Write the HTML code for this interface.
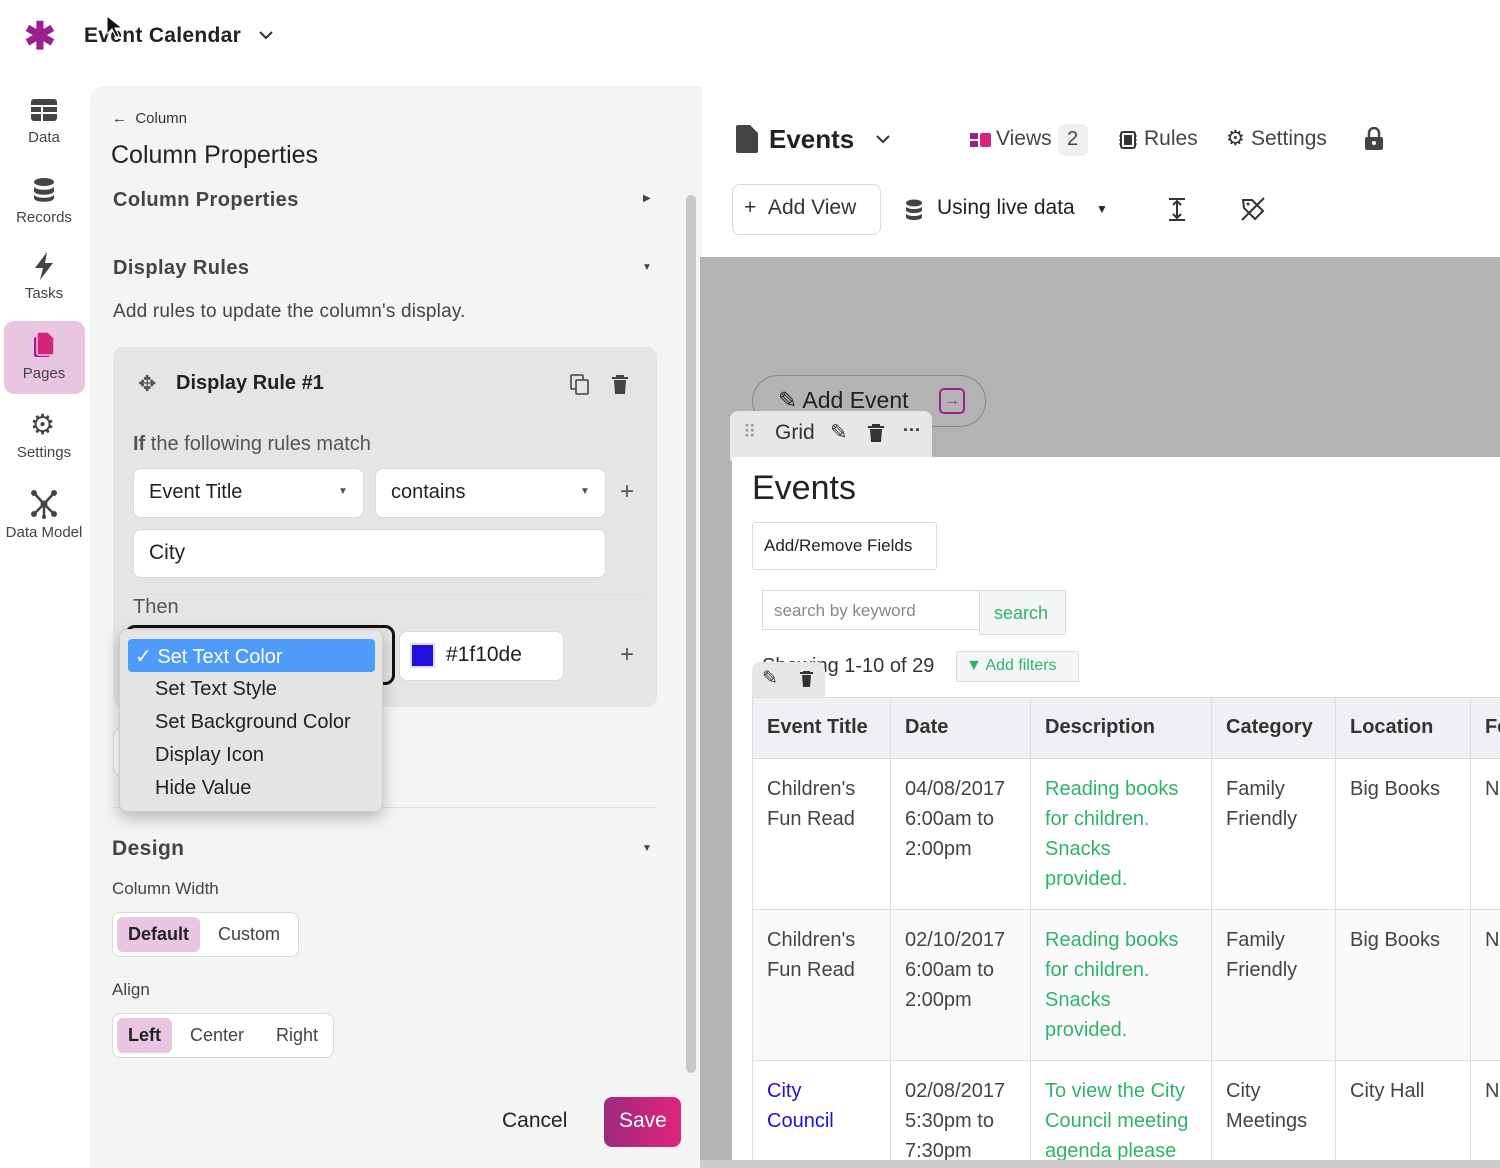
<!DOCTYPE html>
<html><head><style>
*{box-sizing:border-box;margin:0;padding:0}
body{width:1500px;height:1168px;overflow:hidden;background:#fff;font-family:"Liberation Sans",sans-serif;color:#222;position:relative}
.a{position:absolute}
.nav{position:absolute;left:0;width:88px;text-align:center;font-size:15px;color:#444}
.btn{position:absolute;background:#fff;border:1px solid #d9d9d9;border-radius:8px}
.t{position:absolute;white-space:nowrap}
td,th{border:1px solid #ddd;vertical-align:top;text-align:left;padding:15px 14px 0 14px;font-size:20px;line-height:30px;color:#444;font-weight:normal}
th{background:#eef0f3;font-weight:bold;padding:14px 14px;color:#333}
.g{color:#2eb46a}
</style></head><body>
<!-- top bar -->
<div class="t" style="left:24px;top:14px;font-size:38px;color:#9b1f8d;font-weight:bold">✱</div>
<div class="t" style="left:84px;top:24px;font-size:21px;font-weight:bold;color:#222;letter-spacing:.3px">Event Calendar</div>
<svg class="a" style="left:258px;top:29px" width="16" height="12"><path d="M2 3l6 6 6-6" stroke="#333" stroke-width="2" fill="none"/></svg>
<svg class="a" style="left:106px;top:15px" width="16" height="24"><path d="M1 1v18l5-5 4 8 3-1-4-8h7z" fill="#111" stroke="#fff"/></svg>

<!-- left nav -->
<svg class="a" style="left:30px;top:98px" width="28" height="24"><rect x="1" y="1" width="26" height="22" rx="3" fill="#444"/><path d="M1 8h26M1 15h26M12 8v15" stroke="#fff" stroke-width="2"/></svg>
<div class="nav" style="top:129px">Data</div>
<svg class="a" style="left:33px;top:177px" width="22" height="26"><ellipse cx="11" cy="5" rx="10" ry="4" fill="#444"/><path d="M1 9c0 5 20 5 20 0v5c0 5-20 5-20 0zM1 17c0 5 20 5 20 0v4c0 5-20 5-20 0z" fill="#444"/></svg>
<div class="nav" style="top:209px">Records</div>
<svg class="a" style="left:33px;top:252px" width="22" height="28"><path d="M14 0L2 16h8l-3 12 13-17h-8z" fill="#444"/></svg>
<div class="nav" style="top:285px">Tasks</div>
<div class="a" style="left:4px;top:321px;width:81px;height:73px;background:#e8c6e2;border-radius:10px"></div>
<svg class="a" style="left:32px;top:331px" width="24" height="28"><rect x="2" y="6" width="16" height="20" rx="2" fill="#9b1f8d"/><path d="M7 1h9l6 6v15a2 2 0 01-2 2H7a2 2 0 01-2-2V3a2 2 0 012-2z" fill="#d3237a" stroke="#e8c6e2" stroke-width="1.5"/></svg>
<div class="nav" style="top:365px">Pages</div>
<div class="t" style="left:30px;top:408px;font-size:28px;color:#444">⚙</div>
<div class="nav" style="top:444px">Settings</div>
<svg class="a" style="left:29px;top:489px" width="30" height="30"><path d="M5 4l10 11 10-11M15 15l-9 9M15 15l9 9M15 15v13" stroke="#444" stroke-width="2.5" fill="none"/><circle cx="5" cy="4" r="3" fill="#444"/><circle cx="25" cy="4" r="3" fill="#444"/><circle cx="15" cy="15" r="3.5" fill="#444"/><circle cx="5" cy="25" r="3" fill="#444"/><circle cx="25" cy="25" r="3" fill="#444"/><circle cx="15" cy="28" r="2" fill="#444"/></svg>
<div class="nav" style="top:524px">Data Model</div>

<!-- left panel -->
<div class="a" style="left:90px;top:86px;width:612px;height:1082px;background:#f4f4f4;border-top-left-radius:14px"></div>
<div class="t" style="left:112px;top:110px;font-size:15px;color:#333">← &nbsp;Column</div>
<div class="t" style="left:111px;top:141px;font-size:25px;color:#222">Column Properties</div>
<div class="t" style="left:113px;top:189px;font-size:20px;font-weight:bold;color:#444;letter-spacing:.4px">Column Properties</div>
<div class="t" style="left:643px;top:193px;font-size:10px;color:#444">▶</div>
<div class="t" style="left:113px;top:257px;font-size:20px;font-weight:bold;color:#444;letter-spacing:.4px">Display Rules</div>
<div class="t" style="left:642px;top:262px;font-size:10px;color:#444">▼</div>
<div class="t" style="left:113px;top:301px;font-size:19px;color:#444;letter-spacing:.2px">Add rules to update the column's display.</div>
<div class="a" style="left:686px;top:195px;width:10px;height:878px;background:#c8c8c8;border-radius:5px"></div>

<div class="a" style="left:113px;top:347px;width:544px;height:360px;background:#e7e4e5;border-radius:10px"></div>
<div class="t" style="left:138px;top:371px;font-size:22px;color:#555">✥</div>
<div class="t" style="left:176px;top:372px;font-size:20px;font-weight:bold;color:#222">Display Rule #1</div>
<svg class="a" style="left:570px;top:374px" width="20" height="22"><rect x="1" y="1" width="12" height="14" rx="1" fill="none" stroke="#555" stroke-width="1.8"/><rect x="6" y="6" width="12" height="14" rx="1" fill="#e7e4e5" stroke="#555" stroke-width="1.8"/></svg>
<svg class="a" style="left:612px;top:375px" width="16" height="20"><path d="M0 3h16M5 3V1h6v2" stroke="#444" stroke-width="2"/><path d="M2 5h12l-1 14H3z" fill="#444"/></svg>
<div class="t" style="left:133px;top:433px;font-size:20px;color:#555"><b>If</b> the following rules match</div>
<div class="btn" style="left:133px;top:468px;width:231px;height:50px;border-radius:8px"></div>
<div class="t" style="left:149px;top:481px;font-size:20px">Event Title</div>
<div class="t" style="left:338px;top:486px;font-size:10px;color:#456">▼</div>
<div class="btn" style="left:375px;top:468px;width:231px;height:50px"></div>
<div class="t" style="left:391px;top:481px;font-size:20px">contains</div>
<div class="t" style="left:580px;top:486px;font-size:10px;color:#456">▼</div>
<div class="t" style="left:620px;top:478px;font-size:24px;color:#555">+</div>
<div class="btn" style="left:133px;top:529px;width:473px;height:49px"></div>
<div class="t" style="left:149px;top:541px;font-size:21px">City</div>
<div class="a" style="left:133px;top:594px;width:510px;height:1px;background:#ddd"></div>
<div class="t" style="left:133px;top:596px;font-size:20px;color:#555">Then</div>
<div class="a" style="left:125px;top:625px;width:270px;height:60px;border:3px solid #111;border-radius:10px"></div>
<div class="btn" style="left:399px;top:631px;width:165px;height:50px"></div>
<div class="a" style="left:412px;top:645px;width:21px;height:21px;background:#1f10de;outline:2px solid #ddd"></div>
<div class="t" style="left:446px;top:643px;font-size:21px">#1f10de</div>
<div class="t" style="left:620px;top:641px;font-size:24px;color:#555">+</div>
<div class="btn" style="left:113px;top:728px;width:20px;height:48px"></div>
<div class="a" style="left:113px;top:807px;width:544px;height:1px;background:#e0e0e0"></div>
<!-- dropdown -->
<div class="a" style="left:119px;top:629px;width:264px;height:183px;background:#e4e4e4;border-radius:8px;box-shadow:0 6px 16px rgba(0,0,0,.25);border:1px solid #ccc"></div>
<div class="a" style="left:128px;top:639px;width:247px;height:33px;background:#4f9bfa;border-radius:4px"></div>
<div class="t" style="left:135px;top:644px;font-size:20px;color:#fff">✓ Set Text Color</div>
<div class="t" style="left:155px;top:678px;font-size:20px">Set Text Style</div>
<div class="t" style="left:155px;top:711px;font-size:20px">Set Background Color</div>
<div class="t" style="left:155px;top:744px;font-size:20px">Display Icon</div>
<div class="t" style="left:155px;top:777px;font-size:20px">Hide Value</div>

<div class="t" style="left:112px;top:837px;font-size:21px;font-weight:bold;color:#444;letter-spacing:.4px">Design</div>
<div class="t" style="left:642px;top:843px;font-size:10px;color:#444">▼</div>
<div class="t" style="left:112px;top:879px;font-size:17px;color:#444">Column Width</div>
<div class="btn" style="left:112px;top:912px;width:187px;height:45px"></div>
<div class="a" style="left:117px;top:917px;width:83px;height:35px;background:#e8c6e2;border-radius:6px"></div>
<div class="t" style="left:128px;top:924px;font-size:18px;font-weight:bold">Default</div>
<div class="t" style="left:218px;top:924px;font-size:18px;color:#444">Custom</div>
<div class="t" style="left:112px;top:980px;font-size:17px;color:#444">Align</div>
<div class="btn" style="left:112px;top:1013px;width:222px;height:45px"></div>
<div class="a" style="left:117px;top:1018px;width:55px;height:35px;background:#e8c6e2;border-radius:6px"></div>
<div class="t" style="left:128px;top:1025px;font-size:18px;font-weight:bold">Left</div>
<div class="t" style="left:190px;top:1025px;font-size:18px;color:#444">Center</div>
<div class="t" style="left:276px;top:1025px;font-size:18px;color:#444">Right</div>
<div class="t" style="left:502px;top:1109px;font-size:21px">Cancel</div>
<div class="a" style="left:604px;top:1097px;width:77px;height:50px;border-radius:8px;background:linear-gradient(90deg,#9b2a7f,#e2247a)"></div>
<div class="t" style="left:619px;top:1109px;font-size:21px;color:#fff">Save</div>

<!-- right header -->
<svg class="a" style="left:736px;top:125px" width="22" height="28"><path d="M2 0h12l8 8v18a2 2 0 01-2 2H2a2 2 0 01-2-2V2a2 2 0 012-2z" fill="#444"/></svg>
<div class="t" style="left:769px;top:124px;font-size:26px;font-weight:bold">Events</div>
<svg class="a" style="left:875px;top:133px" width="16" height="12"><path d="M2 3l6 6 6-6" stroke="#333" stroke-width="2" fill="none"/></svg>
<svg class="a" style="left:970px;top:132px" width="22" height="16"><rect x="0" y="1" width="8" height="6" fill="#9b1f8d"/><rect x="0" y="9" width="8" height="6" fill="#9b1f8d"/><rect x="10" y="1" width="11" height="14" rx="2" fill="#d3237a"/></svg>
<div class="t" style="left:996px;top:127px;font-size:21px;color:#444">Views</div>
<div class="a" style="left:1058px;top:124px;width:30px;height:32px;background:#f0f0f0;border-radius:6px"></div>
<div class="t" style="left:1067px;top:128px;font-size:20px;color:#444">2</div>
<svg class="a" style="left:1118px;top:129px" width="20" height="22"><rect x="3" y="3" width="14" height="16" rx="2" fill="none" stroke="#333" stroke-width="2"/><rect x="6" y="6" width="8" height="10" fill="#333"/><path d="M1 7h2M1 11h2M1 15h2M17 7h2M17 11h2M17 15h2" stroke="#333"/></svg>
<div class="t" style="left:1144px;top:127px;font-size:21px;color:#444">Rules</div>
<div class="t" style="left:1226px;top:126px;font-size:21px;color:#333">⚙</div>
<div class="t" style="left:1251px;top:127px;font-size:21px;color:#444">Settings</div>
<svg class="a" style="left:1364px;top:127px" width="20" height="24"><path d="M5 10V6a5 5 0 0110 0v4" stroke="#444" stroke-width="2.5" fill="none"/><rect x="1" y="10" width="18" height="13" rx="2" fill="#444"/><circle cx="10" cy="16" r="2" fill="#fff"/></svg>
<div class="btn" style="left:732px;top:184px;width:149px;height:51px"></div>
<div class="t" style="left:744px;top:196px;font-size:21px;color:#333">+ &nbsp;Add View</div>
<svg class="a" style="left:905px;top:199px" width="18" height="22"><ellipse cx="9" cy="4" rx="8" ry="3.5" fill="#444"/><path d="M1 7c0 4 16 4 16 0v4c0 4-16 4-16 0zM1 14c0 4 16 4 16 0v4c0 4-16 4-16 0z" fill="#444"/></svg>
<div class="t" style="left:937px;top:196px;font-size:21px;color:#222">Using live data</div>
<div class="t" style="left:1096px;top:202px;font-size:12px;color:#222">▼</div>
<svg class="a" style="left:1166px;top:197px" width="22" height="26"><path d="M3 2h16M3 23h16M11 4v17M7 8l4-4 4 4M7 17l4 4 4-4" stroke="#333" stroke-width="2" fill="none"/></svg>
<svg class="a" style="left:1240px;top:196px" width="26" height="26"><path d="M3 4h9l11 11-8 8L4 12z" fill="none" stroke="#333" stroke-width="2"/><circle cx="8" cy="8" r="1.5" fill="#333"/><path d="M2 24L24 2" stroke="#333" stroke-width="2"/></svg>

<!-- grey canvas -->
<div class="a" style="left:700px;top:257px;width:800px;height:911px;background:#b3b3b3"></div>
<div class="a" style="left:752px;top:375px;width:234px;height:52px;border:1.5px solid #888;border-radius:26px"></div>
<div class="t" style="left:778px;top:387px;font-size:23px;color:#222">✎ Add Event</div>
<div class="a" style="left:939px;top:388px;width:26px;height:26px;border:2px solid #9b1f8d;border-radius:5px;color:#9b1f8d;text-align:center;font-size:16px;line-height:22px">→</div>
<div class="a" style="left:730px;top:411px;width:202px;height:50px;background:#e9e6e7;border-radius:8px 8px 0 0"></div>
<div class="t" style="left:743px;top:422px;font-size:18px;color:#999">⠿</div>
<div class="t" style="left:775px;top:421px;font-size:21px;color:#333">Grid</div>
<div class="t" style="left:830px;top:420px;font-size:21px;color:#333">✎</div>
<svg class="a" style="left:868px;top:424px" width="16" height="19"><path d="M0 3h16M5 3V1h6v2" stroke="#333" stroke-width="2"/><path d="M2 5h12l-1 13H3z" fill="#333"/></svg>
<div class="t" style="left:903px;top:420px;font-size:18px;color:#333;font-weight:bold">···</div>

<div class="a" style="left:732px;top:457px;width:768px;height:703px;background:#fff"></div>
<div class="t" style="left:752px;top:469px;font-size:34px;color:#222">Events</div>
<div class="btn" style="left:752px;top:522px;width:185px;height:48px;border-radius:3px"></div>
<div class="t" style="left:764px;top:536px;font-size:17px;color:#222">Add/Remove Fields</div>
<div class="a" style="left:762px;top:590px;width:218px;height:40px;border:1px solid #ddd"></div>
<div class="t" style="left:774px;top:601px;font-size:17px;color:#888">search by keyword</div>
<div class="a" style="left:979px;top:590px;width:87px;height:45px;border:1px solid #ddd;background:#f4f5f7"></div>
<div class="t" style="left:994px;top:603px;font-size:18px;color:#2eb46a">search</div>
<div class="t" style="left:762px;top:655px;font-size:20px;color:#333">Showing 1-10 of 29</div>
<div class="a" style="left:956px;top:651px;width:123px;height:31px;border:1px solid #ddd;background:#f4f5f7"></div>
<div class="t" style="left:966px;top:657px;font-size:16px;color:#2eb46a">▼ Add filters</div>
<div class="a" style="left:752px;top:662px;width:73px;height:36px;background:#e9e6e7;border-radius:8px 8px 0 0"></div>
<div class="t" style="left:762px;top:667px;font-size:19px;color:#333">✎</div>
<svg class="a" style="left:800px;top:671px" width="13" height="16"><path d="M0 2h13M4 2V0h5v2" stroke="#333" stroke-width="2"/><path d="M2 4h9l-1 12H3z" fill="#333"/></svg>

<div class="a" style="left:752px;top:697px;width:748px;height:463px;overflow:hidden">
<table style="border-collapse:collapse;width:780px;table-layout:fixed">
<col style="width:138px"><col style="width:140px"><col style="width:181px"><col style="width:124px"><col style="width:135px"><col style="width:62px">
<tr style="height:61px"><th>Event Title</th><th>Date</th><th>Description</th><th>Category</th><th>Location</th><th>Fe</th></tr>
<tr style="height:151px"><td>Children's Fun Read</td><td>04/08/2017 6:00am to 2:00pm</td><td class="g">Reading books for children. Snacks provided.</td><td>Family Friendly</td><td>Big Books</td><td>N</td></tr>
<tr style="height:151px;background:#fafafa"><td>Children's Fun Read</td><td>02/10/2017 6:00am to 2:00pm</td><td class="g">Reading books for children. Snacks provided.</td><td>Family Friendly</td><td>Big Books</td><td>N</td></tr>
<tr style="height:151px"><td style="color:#1f10de">City<br>Council</td><td>02/08/2017 5:30pm to 7:30pm</td><td class="g">To view the City Council meeting agenda please</td><td>City Meetings</td><td>City Hall</td><td>N</td></tr>
</table>
</div>
<div class="a" style="left:700px;top:1160px;width:800px;height:8px;background:#ccc"></div>
</body></html>
